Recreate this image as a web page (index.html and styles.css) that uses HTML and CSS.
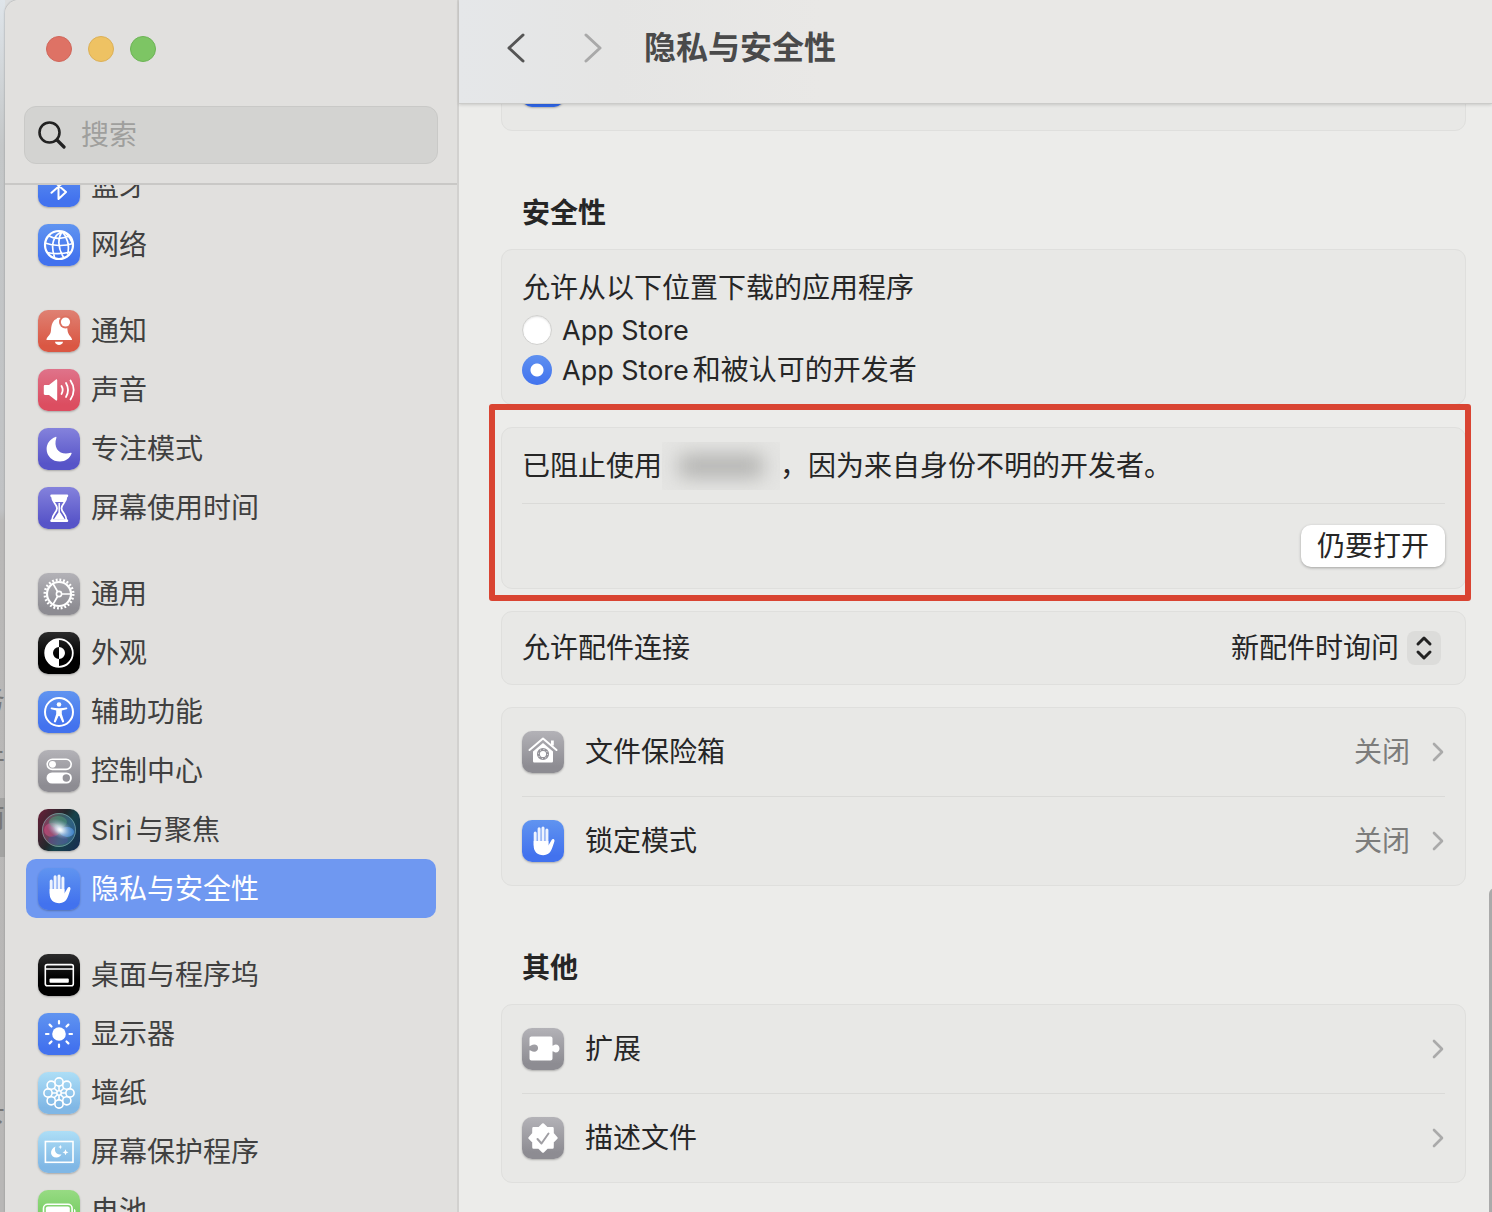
FILE: index.html
```html
<!DOCTYPE html>
<html lang="zh-CN">
<head>
    <meta charset="UTF-8">
    <meta name="viewport" content="width=device-width, initial-scale=1.0">
    <title>隐私与安全性</title>
    <link rel="stylesheet" href="styles.css">
</head>
<body>
    <!-- shared glyphs -->
    <svg class="defs" aria-hidden="true">
        <symbol id="hand" viewBox="0 0 42 42">
            <path d="M13.2 13v12M17.1 8.8v16M21 8v16M24.9 10v15" stroke="#fff" stroke-width="3" stroke-linecap="round" opacity=".9"/>
            <path d="M11.7 21h14.7v4.5l3.2-5.6c.8-1.4 3-1 2.9.8-.1 1.2-2 6.600-3.200 9.300-1.400 3.200-4.200 5.200-8 5.200-6 0-9.600-3.700-9.600-9.200z" fill="#fff"/>
        </symbol>
        <symbol id="chevron" viewBox="0 0 12 20">
            <path d="M2 2l8 8-8 8" fill="none" stroke="currentColor" stroke-width="2.600" stroke-linecap="round" stroke-linejoin="round"/>
        </symbol>
    </svg>

    <div class="desktop" aria-hidden="true">
        <span class="behind">务</span>
        <span class="behind">件</span>
        <span class="behind dark">南</span>
        <span class="behind last">下</span>
    </div>

    <div class="window">
        <aside class="sidebar">
            <div class="sidebar-top">
                <div class="lights">
                    <button class="light red" aria-label="关闭窗口"></button>
                    <button class="light yellow" aria-label="最小化"></button>
                    <button class="light green" aria-label="缩放"></button>
                </div>
                <label class="search">
                    <svg width="28" height="28" viewBox="0 0 28 28" fill="none" stroke="#222" stroke-width="2.600" stroke-linecap="round"><circle cx="11.500" cy="11.500" r="10"/><path d="M19 19l7 7" stroke-width="3.200"/></svg>
                    <input type="search" placeholder="搜索" aria-label="搜索">
                </label>
            </div>

            <nav class="list">
                <div class="scrolled">
                    <div class="group">
                        <a href="#" class="item">
                            <svg class="icon blue" viewBox="0 0 42 42" fill="none" stroke="#fff" stroke-width="2" stroke-linejoin="round" stroke-linecap="round"><path d="M13.500 14.500L28 27l-7.500 7V8l7.500 7-14.500 12.800"/></svg>
                            <span>蓝牙</span>
                        </a>
                        <a href="#" class="item">
                            <svg class="icon blue" viewBox="0 0 42 42" fill="none" stroke="#fff" stroke-width="1.700"><circle cx="21" cy="21" r="14" stroke-width="2.200"/><path d="M24 7.500C16 11 12 20 16.500 33M24 7.500c-4 6-5 16 2 26.500M24 7.500c5 5 8 14 5.500 23M24 7.500c4 1 8 6 10.500 12M11 12c6 3.500 15 3 20.500-.5M7 19c8 3 20 3.500 28 .5M9.500 28.500c8 2 15 1.500 23-.5"/></svg>
                            <span>网络</span>
                        </a>
                    </div>

                    <div class="group">
                        <a href="#" class="item">
                            <svg class="icon orange" viewBox="0 0 42 42" fill="#fff"><path d="M8.500 30c-.4-3 4.200-4.200 4.500-9.800.3-6.400 2.200-10 5.500-11.200 0-1.700 5-1.700 5 0 4.400 1.600 5.600 5.600 6 11 .4 5.800 4.900 7 4.500 10z"/><path d="M17 31.800h8c-.4 4.200-7.600 4.200-8 0z"/><circle cx="27.500" cy="12" r="6.500" fill="#dd705f"/><circle cx="27.500" cy="12" r="4.600"/></svg>
                            <span>通知</span>
                        </a>
                        <a href="#" class="item">
                            <svg class="icon pink" viewBox="0 0 42 42" fill="none" stroke="#fff" stroke-width="1.800" stroke-linecap="round"><path d="M7 16h4l7-5.500c.6-.4 1.200 0 1.200.7v19.600c0 .7-.6 1.100-1.200.7L11 26H7c-.8 0-1.200-.5-1.200-1.200v-7.600c0-.7.400-1.200 1.200-1.200z" fill="#fff" stroke="none"/><path d="M23.500 17c1.500 2.500 1.500 5.500 0 8M28 14c2.600 4.500 2.600 9.500 0 14M32.500 11.500c4 6 4 13 0 19"/></svg>
                            <span>声音</span>
                        </a>
                        <a href="#" class="item">
                            <svg class="icon purple" viewBox="0 0 42 42" fill="#fff"><path d="M17.600 8.900c.5-.2 1 .2.8.8-3.700 11 4 18.300 14.300 15.100.6-.2 1.100.3.9.8C31.800 30.500 27.500 33.600 22 33.600c-7.600 0-13.400-5.500-13.400-12.600 0-5.500 3.400-10.200 9-12.100z"/></svg>
                            <span>专注模式</span>
                        </a>
                        <a href="#" class="item">
                            <svg class="icon purple" viewBox="0 0 42 42" fill="none" stroke="#fff" stroke-width="1.800"><path d="M14 9.500h14.500c0 6-5 7.500-5 11.700s5 6 5 12H14c0-6 5-7.800 5-12s-5-5.700-5-11.700z"/><path d="M13.500 8.800h15.500M13.500 33.700h15.500" stroke-width="2.500" stroke-linecap="round"/><path d="M14 9h14.500c0 3-1 4.500-2.200 6h-10c-1.300-1.500-2.300-3-2.300-6zM16 32l5.300-8 5.300 8z" fill="#fff" stroke="none"/><path d="M21.200 16v9" stroke-width="1.500"/></svg>
                            <span>屏幕使用时间</span>
                        </a>
                    </div>

                    <div class="group">
                        <a href="#" class="item">
                            <svg class="icon gray" viewBox="0 0 42 42" fill="none" stroke="#fff"><circle cx="21" cy="21" r="14.200" stroke-width="2.600" stroke-dasharray="1.860 1.857"/><circle cx="21" cy="21" r="12" stroke-width="2.200"/><circle cx="21" cy="21" r="2.600" stroke-width="1.600"/><path d="M23.600 21H33M19.700 18.700L15 10.600M19.700 23.300L15 31.400" stroke-width="1.700"/></svg>
                            <span>通用</span>
                        </a>
                        <a href="#" class="item">
                            <svg class="icon black" viewBox="0 0 42 42"><circle cx="21" cy="21" r="13.800" fill="none" stroke="#fff" stroke-width="1.800"/><path d="M21 7a14 14 0 0 0 0 28v-8a6 6 0 0 1 0-12zM21 15a6 6 0 0 1 0 12z" fill="#fff"/></svg>
                            <span>外观</span>
                        </a>
                        <a href="#" class="item">
                            <svg class="icon blue" viewBox="0 0 42 42" fill="#fff"><circle cx="21" cy="21" r="14" fill="none" stroke="#fff" stroke-width="2"/><circle cx="21" cy="13.500" r="2.300"/><path d="M13.500 16.600c4.500 1 10.500 1 15 0 1 0 1.200 1.300.2 1.700l-4.900 1.200v3.500l2.300 7.300c.2 1.200-1.400 1.600-1.900.6L21.500 25h-1l-2.700 5.900c-.5 1-2.100.6-1.900-.6l2.300-7.300v-3.500l-4.900-1.200c-1-.4-.8-1.700.2-1.700z"/></svg>
                            <span>辅助功能</span>
                        </a>
                        <a href="#" class="item">
                            <svg class="icon gray" viewBox="0 0 42 42" fill="#fff"><rect x="9.200" y="9.200" width="24" height="10.200" rx="5.100" fill="none" stroke="#fff" stroke-width="1.600"/><circle cx="14.500" cy="14.300" r="3.400"/><rect x="8.500" y="22.500" width="25.400" height="11" rx="5.500"/><circle cx="28.300" cy="28" r="3.700" fill="#95949a"/></svg>
                            <span>控制中心</span>
                        </a>
                        <a href="#" class="item">
                            <svg class="icon siri" viewBox="0 0 42 42">
                                <defs>
                                    <radialGradient id="glow"><stop offset="0" stop-color="#fff"/><stop offset=".35" stop-color="#e6f1f6" stop-opacity=".7"/><stop offset="1" stop-color="#9ad" stop-opacity="0"/></radialGradient>
                                    <linearGradient id="orb"><stop offset="0" stop-color="#c04478"/><stop offset=".5" stop-color="#5a9088"/><stop offset="1" stop-color="#3b74bd"/></linearGradient>
                                </defs>
                                <circle cx="21" cy="21" r="17" fill="url(#orb)" opacity=".55"/>
                                <circle cx="21" cy="21" r="16.500" fill="none" stroke="#79a7a4" stroke-width="1" opacity=".7"/>
                                <ellipse cx="14" cy="21" rx="8" ry="7" fill="#df4d87" opacity=".5"/>
                                <ellipse cx="20" cy="13" rx="9" ry="6" fill="#4f9b79" opacity=".5"/>
                                <ellipse cx="29" cy="23" rx="7" ry="5" fill="#4f96e0" opacity=".75"/>
                                <ellipse cx="20" cy="31" rx="10" ry="5" fill="#554aa6" opacity=".4"/>
                                <ellipse cx="22" cy="20" rx="14" ry="9" fill="url(#glow)" transform="rotate(28 22 20)"/>
                                <ellipse cx="22" cy="21" rx="7" ry="5" fill="url(#glow)" transform="rotate(28 22 21)"/>
                            </svg>
                            <span><span class="latin">Siri</span>与聚焦</span>
                        </a>
                        <a href="#" class="item selected" aria-current="page">
                            <svg class="icon blue"><use href="#hand"/></svg>
                            <span>隐私与安全性</span>
                        </a>
                    </div>

                    <div class="group">
                        <a href="#" class="item">
                            <svg class="icon black" viewBox="0 0 42 42" fill="none" stroke="#fff" stroke-width="1.600"><rect x="7.300" y="10.600" width="28" height="21.200" rx="2"/><path d="M7.500 15h27.600"/><rect x="11.500" y="24.500" width="19.300" height="4.300" rx="1" fill="#fff" stroke="none"/></svg>
                            <span>桌面与程序坞</span>
                        </a>
                        <a href="#" class="item">
                            <svg class="icon blue" viewBox="0 0 42 42" stroke="#fff" stroke-width="2.200" stroke-linecap="round"><circle cx="21" cy="21" r="6.800" fill="#fff" stroke="none"/><path d="M21 8v2.500M21 31.500V34M8 21h2.500M31.500 21H34M11.600 11.600l1.900 1.900M28.500 28.500l1.900 1.900M11.600 30.400l1.900-1.900M28.500 13.500l1.900-1.900"/></svg>
                            <span>显示器</span>
                        </a>
                        <a href="#" class="item">
                            <svg class="icon sky" viewBox="0 0 42 42" fill="none" stroke="#fff" stroke-width="1.600"><circle cx="21" cy="10" r="4.100"/><circle cx="28.800" cy="13.200" r="4.100"/><circle cx="32" cy="21" r="4.100"/><circle cx="28.800" cy="28.800" r="4.100"/><circle cx="21" cy="32" r="4.100"/><circle cx="13.200" cy="28.800" r="4.100"/><circle cx="10" cy="21" r="4.100"/><circle cx="13.200" cy="13.200" r="4.100"/><circle cx="21" cy="21" r="2.200"/><path d="M21 14v4.500M21 23.500V28M14 21h4.500M23.500 21H28M16 16l3.300 3.300M22.700 22.700L26 26M16 26l3.300-3.300M22.700 19.300L26 16"/></svg>
                            <span>墙纸</span>
                        </a>
                        <a href="#" class="item">
                            <svg class="icon sky" viewBox="0 0 42 42" fill="#fff"><rect x="7.400" y="10.500" width="27.600" height="20.800" fill="none" stroke="#fff" stroke-width="1.600"/><path d="M17.500 15.500c-6.500 3-5.600 11 1 11 2.500 0 4.200-1.200 5-3.200-5 1.200-7.800-3-6-7.800zM22.300 13.800l.6 1.600 1.600.6-1.600.6-.6 1.600-.6-1.600-1.600-.6 1.600-.6zM27.500 18.300l.9 2.100 2.100.9-2.100.9-.9 2.100-.9-2.100-2.100-.9 2.100-.9z"/></svg>
                            <span>屏幕保护程序</span>
                        </a>
                        <a href="#" class="item">
                            <svg class="icon lime" viewBox="0 0 42 42" fill="#fff"><rect x="5.500" y="14.300" width="28.600" height="14" rx="4" fill="none" stroke="#fff" stroke-width="1.600"/><rect x="7.800" y="16.600" width="24" height="9.400" rx="2"/><path d="M36 19c2 .4 2 4.200 0 4.600z"/></svg>
                            <span>电池</span>
                        </a>
                    </div>
                </div>
            </nav>
        </aside>

        <main class="main">
            <header class="toolbar">
                <button class="nav back" aria-label="返回"><svg width="20" height="32" viewBox="0 0 20 32"><path d="M18 3L4 16l14 13"/></svg></button>
                <button class="nav forward" aria-label="前进" disabled><svg width="20" height="32" viewBox="0 0 20 32"><path d="M2 3l14 13L2 29"/></svg></button>
                <h1>隐私与安全性</h1>
            </header>

            <div class="content">
                <div class="pane">
                    <section class="card">
                        <div class="row"><svg class="icon deep"></svg></div>
                    </section>

                    <h2>安全性</h2>
                    <div class="cards">
                        <fieldset class="card sources">
                            <legend>允许从以下位置下载的应用程序</legend>
                            <label><input type="radio" name="source"><span><span class="latin">App Store</span></span></label>
                            <label><input type="radio" name="source" checked><span><span class="latin">App Store</span>和被认可的开发者</span></label>
                        </fieldset>

                        <section class="card blocked">
                            <p class="notice">已阻止使用<span class="redacted"></span>，因为来自身份不明的开发者。</p>
                            <div class="actions"><button class="push">仍要打开</button></div>
                            <div class="highlight"></div>
                        </section>

                        <section class="card accessory">
                            <label for="accessory">允许配件连接</label>
                            <div class="popup">
                                <select id="accessory">
                                    <option>新配件时询问</option>
                                </select>
                                <svg class="stepper" viewBox="0 0 34 34" fill="none" stroke="#222" stroke-width="3" stroke-linecap="round" stroke-linejoin="round"><path d="M11 13l6-6 6 6M11 21l6 6 6-6"/></svg>
                            </div>
                        </section>

                        <section class="card">
                            <a href="#" class="row">
                                <svg class="icon gray" viewBox="0 0 42 42" fill="none" stroke="#fff"><path d="M11 20.500L21 12l10 8.500V30c0 1-.6 1.600-1.600 1.600H12.600c-1 0-1.600-.6-1.600-1.600z" fill="#fff" stroke="none"/><path d="M7.500 19L21 7.500 34.500 19" stroke-width="2" stroke-linecap="round" stroke-linejoin="round"/><path d="M30.400 9.500v5" stroke-width="2.800"/><circle cx="21" cy="23" r="4.600" stroke="#95949a" stroke-width="3"/><circle cx="21" cy="23" r="4.600" stroke-width="1" stroke-dasharray="1 2.600"/></svg>
                                <span class="name">文件保险箱</span>
                                <span class="state">关闭</span>
                                <svg class="go"><use href="#chevron"/></svg>
                            </a>
                            <a href="#" class="row">
                                <svg class="icon blue"><use href="#hand"/></svg>
                                <span class="name">锁定模式</span>
                                <span class="state">关闭</span>
                                <svg class="go"><use href="#chevron"/></svg>
                            </a>
                        </section>
                    </div>

                    <h2>其他</h2>
                    <section class="card">
                        <a href="#" class="row">
                            <svg class="icon gray" viewBox="0 0 42 42" fill="#fff"><path d="M9.500 8.500h19c1.200 0 2 .8 2 2v7.200c1.200 0 1.800-1.200 3.200-1.200 5 0 5 8 0 8-1.400 0-2-1.200-3.200-1.200v7.200c0 1.200-.8 2-2 2h-19c-1.200 0-2-.8-2-2v-8.300c1.600 0 2.200 1.600 4.700 1.600 5.200 0 5.200-7.200 0-7.200-2.500 0-3.100 1.600-4.700 1.600v-7.700c0-1.200.8-2 2-2z"/></svg>
                            <span class="name">扩展</span>
                            <svg class="go"><use href="#chevron"/></svg>
                        </a>
                        <a href="#" class="row">
                            <svg class="icon gray" viewBox="0 0 42 42" fill="#fff" stroke="#fff" stroke-width="2.500" stroke-linejoin="round"><path d="M21 7.500l4 3.800 5.500-.1.100 5.500 3.900 4.300-3.900 4-.1 5.500-5.500.1-4 3.900-4-3.900-5.500-.1-.1-5.500-3.900-4 3.900-4.300.1-5.500 5.500.1z"/><path d="M15.500 22l4 4.500 7-10" fill="none" stroke="#a09fa4" stroke-width="2" stroke-linecap="round"/></svg>
                            <span class="name">描述文件</span>
                            <svg class="go"><use href="#chevron"/></svg>
                        </a>
                    </section>
                </div>
                <div class="scrollbar"></div>
            </div>
        </main>
    </div>
</body>
</html>
```
FILE: styles.css
```css
* {
    box-sizing: border-box;
}
body {
    display: flex;
    height: 100vh;
    margin: 0;
    overflow: hidden;
    background: #dcdedf;
    color: #262626;
    font-family: Inter, "Noto Sans CJK SC", sans-serif;
    font-size: 28px;
    line-height: 40px;
}
a {
    color: inherit;
    text-decoration: none;
}
button, input, select {
    margin: 0;
    border: 0;
    color: inherit;
    font: inherit;
}
.defs {
    position: absolute;
    width: 0;
    height: 0;
}
.latin {
    margin-right: 4px;
    font-size: 27px;
    line-height: 1;
}

/* what shows of the desktop behind the window */
.desktop {
    display: flex;
    flex-direction: column;
    align-items: flex-end;
    width: 5px;
    padding-top: 680px;
    overflow: hidden;
    background: linear-gradient(#dfe5ea, #c4c7c8 12%, #c0c2c4 42%, #b9b8b7 43%, #b8b7b6);
}
.behind {
    height: 59px;
    color: #777;
}
.behind.dark {
    background: #a3a3a2;
}
.behind.last {
    margin-top: 244px;
}

.window {
    display: flex;
    flex: 1;
    min-width: 0;
    border-top-left-radius: 14px;
    background: #ececea;
    box-shadow: 0 0 2px #888;
    overflow: hidden;
}

/* sidebar */
.sidebar {
    display: flex;
    flex-direction: column;
    flex: 0 0 454px;
    min-width: 0;
    border-right: 2px solid #d2d1cf;
    background: #e1e0de;
    color: #404040;
}
.sidebar-top {
    padding: 36px 19px 19px;
    border-bottom: 2px solid #c9c8c6;
}
.lights {
    display: flex;
    gap: 16px;
    padding-left: 22px;
    margin-bottom: 44px;
}
.light {
    width: 26px;
    height: 26px;
    padding: 0;
    border-radius: 50%;
}
.red {
    background: #de7265;
    border: 1px solid #d0665a;
}
.yellow {
    background: #eec263;
    border: 1px solid #dcb056;
}
.green {
    background: #7dc564;
    border: 1px solid #6cb455;
}
.search {
    display: flex;
    align-items: center;
    gap: 15px;
    height: 58px;
    padding: 0 13px;
    border: 1px solid #c9c9c7;
    border-radius: 12px;
    background: #d3d3d1;
}
.search svg {
    flex: none;
}
.search input {
    flex: 1;
    width: 100%;
    min-width: 0;
    padding: 0;
    background: none;
    outline: none;
}
.search input::placeholder {
    color: #9f9f9d;
}
.list {
    flex: 1;
    min-height: 0;
    overflow: hidden;
}
.scrolled {
    display: flex;
    flex-direction: column;
    gap: 27px;
    margin: -29px 21px 0;
}
.item {
    display: flex;
    align-items: center;
    gap: 11px;
    height: 59px;
    padding: 0 12px;
    border-radius: 10px;
}
.item.selected {
    background: #6f98f1;
    color: #fff;
}

/* icon tiles */
.icon {
    flex: none;
    width: 42px;
    height: 42px;
    border-radius: 10px;
    box-shadow: 0 1px 2px rgba(0, 0, 0, 0.25);
}
.blue {
    background: linear-gradient(#6094f0, #4272ee 85%);
}
.deep {
    background: #2f66e8;
}
.orange {
    background: linear-gradient(#df8173, #da5743 85%);
}
.pink {
    background: linear-gradient(#df738a, #dc4d60 85%);
}
.purple {
    background: linear-gradient(#8482dc, #5754c8 85%);
}
.gray {
    background: linear-gradient(#b3b2b7, #8d8c92 85%);
}
.black {
    background: linear-gradient(#2c2c2c, #000 60%);
}
.sky {
    background: linear-gradient(#addef6, #80b7e5 85%);
}
.lime {
    background: linear-gradient(#97db83, #66c653);
}
.siri {
    background: linear-gradient(120deg, #6b1f38, #22282c 45%, #16434a 60%, #182b52);
}

/* main column */
.main {
    display: flex;
    flex-direction: column;
    flex: 1;
    min-width: 0;
}
.toolbar {
    display: flex;
    align-items: center;
    height: 104px;
    padding: 0 46px 8px;
    border-bottom: 1px solid #cbcbc9;
    background: linear-gradient(90deg, #e5e7e9, #e5e5e4 15%, #e9e8e6 35%);
    box-shadow: 0 1px 3px rgba(0, 0, 0, 0.15);
    z-index: 1;
}
.toolbar h1 {
    margin: 0;
    color: #4a4a4a;
    font-size: 32px;
    font-weight: 700;
}
.nav {
    height: 32px;
    padding: 0;
    background: none;
    color: #555;
}
.nav svg {
    display: block;
    fill: none;
    stroke: currentColor;
    stroke-width: 3;
    stroke-linecap: round;
    stroke-linejoin: round;
}
.back {
    margin-right: 59px;
}
.forward {
    margin-right: 40px;
    color: #a9a9a9;
}
.content {
    position: relative;
    flex: 1;
    min-height: 0;
    overflow: hidden;
}
.pane {
    margin-top: -63px;
    padding: 0 26px 30px 42px;
}
.pane h2 {
    margin: 0;
    padding: 62px 21px 16px;
    font-size: 28px;
    font-weight: 700;
}
.cards {
    display: flex;
    flex-direction: column;
    gap: 22px;
}
.card {
    margin: 0;
    padding: 0 20px;
    border: 1px solid #dfdfdd;
    border-radius: 11px;
    background: #e8e8e6;
}
.row {
    display: flex;
    align-items: center;
    gap: 21px;
    height: 88px;
}
.row + .row {
    height: 89px;
    border-top: 1px solid #dadad8;
}
.name {
    flex: 1;
}
.state {
    color: #7c7c7b;
}
.go {
    width: 14px;
    height: 20px;
    color: #aaa;
}

/* download sources */
.sources {
    display: flex;
    flex-direction: column;
    padding: 18px 20px 14px;
}
.sources legend {
    float: left;
    padding: 0;
    margin-bottom: 2px;
}
.sources label {
    display: flex;
    align-items: center;
    gap: 10px;
    height: 40px;
}
.sources input {
    appearance: none;
    width: 30px;
    height: 30px;
    border: 1px solid #d0d0ce;
    border-radius: 50%;
    background: #fff;
    box-shadow: inset 0 1px 2px rgba(0, 0, 0, 0.12);
}
.sources input:checked {
    border: 0;
    background: radial-gradient(circle, #fff 6px, transparent 7px), linear-gradient(#5e90f0, #4273ee);
    box-shadow: none;
}

/* blocked app */
.blocked {
    position: relative;
}
.notice {
    display: flex;
    align-items: center;
    height: 76px;
    margin: 0;
    border-bottom: 1px solid #dadad8;
}
.redacted {
    display: flex;
    align-items: center;
    justify-content: center;
    width: 118px;
    height: 48px;
    background: #e5e5e3;
    overflow: hidden;
}
.redacted::before {
    content: "";
    width: 84px;
    height: 22px;
    background: #b0b0ae;
    filter: blur(10px);
}
.actions {
    display: flex;
    align-items: center;
    justify-content: flex-end;
    height: 84px;
}
.push {
    height: 42px;
    padding: 0 16px;
    border-radius: 10px;
    background: #fff;
    box-shadow: 0 1px 3px rgba(0, 0, 0, 0.3);
}
.highlight {
    position: absolute;
    inset: -24px -6px -13px -13px;
    border: 6px solid #d94432;
    border-radius: 3px;
    pointer-events: none;
}

/* accessory popup */
.accessory {
    display: flex;
    align-items: center;
    justify-content: space-between;
    height: 74px;
}
.popup {
    display: grid;
    align-items: center;
    margin-right: 4px;
}
.popup select,
.stepper {
    grid-area: 1 / 1;
}
.popup select {
    appearance: none;
    padding: 0 41px 0 0;
    background: none;
}
.stepper {
    justify-self: end;
    width: 34px;
    height: 34px;
    border-radius: 8px;
    background: #dcdcda;
    pointer-events: none;
}

.scrollbar {
    position: absolute;
    top: 784px;
    right: -9px;
    bottom: 0;
    width: 12px;
    border-radius: 6px 6px 0 0;
    background: #aaa;
}
```
